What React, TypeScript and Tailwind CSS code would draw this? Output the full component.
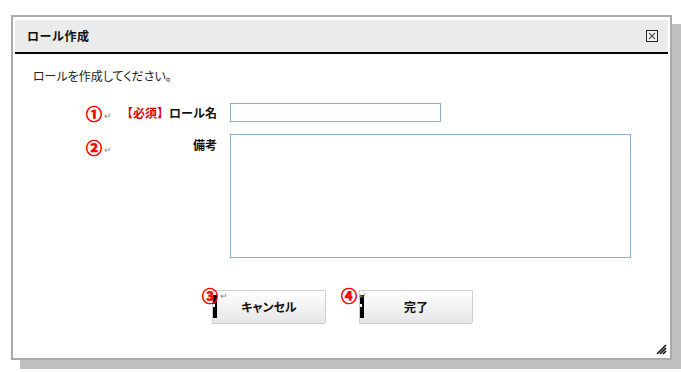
import React from "react";

const jp = "font-['MS_PGothic','Noto_Sans_CJK_JP',sans-serif]";

function Mark({ n, className }: { n: string; className: string }) {
  return (
    <span className={`absolute flex items-start ${className}`}>
      <span className="text-[16px] leading-[16px] font-bold text-[#ff0000] [-webkit-text-stroke:0.7px_#ff0000]">{n}</span>
    </span>
  );
}

function Ret({ className }: { className: string }) {
  return <span className={`absolute text-[9px] leading-[9px] text-[#8a8a8a] ${className}`}>↵</span>;
}

function Bar() {
  return (
    <span className="absolute left-[1px] top-[5px] w-[4px] h-[23px] bg-black">
      <span className="absolute left-0 top-[9px] w-[2px] h-[3px] bg-white" />
    </span>
  );
}

export default function App() {
  return (
    <div className={`w-[681px] h-[372px] bg-white pt-[15px] pl-[11px] ${jp} [font-feature-settings:'palt'] text-[#111]`}>
      <div className="relative w-[661px] h-[345px] border-2 border-[#aaaaaa] bg-white pt-[3px] px-[2px] shadow-[9px_9px_0_#c0c0c0] flex flex-col">
        <div className="h-[34px] bg-[#ebebeb] border-b-2 border-black flex items-center justify-between pl-[12px] pr-[10px] pb-[1px]">
          <span className="text-[12px] font-bold [font-feature-settings:normal] tracking-[0.5px]">ロール作成</span>
          <svg width="12" height="12" viewBox="0 0 12 12">
            <rect x="0.5" y="0.5" width="11" height="11" fill="#f4f4f4" stroke="#222" />
            <path d="M3 3 L9 9 M9 3 L3 9" stroke="#555" strokeWidth="1.1" />
          </svg>
        </div>

        <div className="pl-[18px] pt-[14px] text-[12px] leading-[16px] text-[#222]">ロールを作成してください。</div>

        <div className="ml-[68px] mt-[19px] grid grid-cols-[134px_401px] gap-x-[13px] gap-y-[12px]">
          <div className="relative h-[19px] flex items-center justify-end">
            <Mark n="①" className="left-[3px] top-[2px]" />
            <Ret className="left-[21px] top-[8px]" />
            <span className="text-[12px] font-bold text-[#e00000] [font-feature-settings:normal]">【必須】</span>
            <span className="text-[12px] font-bold [font-feature-settings:normal]">ロール名</span>
          </div>
          <div>
            <input className="block w-[211px] h-[19px] border border-[#8fabc8] bg-white outline-none" />
          </div>
          <div className="relative h-[124px] flex justify-end">
            <Mark n="②" className="left-[3px] top-[5px]" />
            <Ret className="left-[21px] top-[11px]" />
            <span className="text-[12px] leading-[14px] mt-[4px] font-bold [font-feature-settings:normal]">備考</span>
          </div>
          <div>
            <textarea className="block w-[401px] h-[124px] border border-[#8fabc8] bg-white outline-none resize-none" />
          </div>
        </div>

        <div className="mt-[32px] flex justify-center gap-[33px] pl-[2px]">
          <div className="relative">
            <button className="w-[114px] h-[34px] border border-[#cfcfcf] rounded-br-[3px] bg-gradient-to-b from-white to-[#e6e6e6] text-[12px] font-bold text-[#111]">
              キャンセル
            </button>
            <Bar />
            <Mark n="③" className="left-[-10px] top-[-3px]" />
            <Ret className="left-[8px] top-[1px]" />
          </div>
          <div className="relative">
            <button className="w-[114px] h-[34px] border border-[#cfcfcf] rounded-br-[3px] bg-gradient-to-b from-white to-[#e6e6e6] text-[12px] font-bold text-[#111]">
              完了
            </button>
            <Bar />
            <Mark n="④" className="left-[-18px] top-[-3px]" />
            <Ret className="left-[0px] top-[1px]" />
          </div>
        </div>

        <svg className="absolute right-[3px] bottom-[3px]" width="11" height="11" viewBox="0 0 11 11">
          <path d="M1 10 L10 1 M4 10 L10 4 M7 10 L10 7" stroke="#111" strokeWidth="1.6" />
        </svg>
      </div>
    </div>
  );
}
